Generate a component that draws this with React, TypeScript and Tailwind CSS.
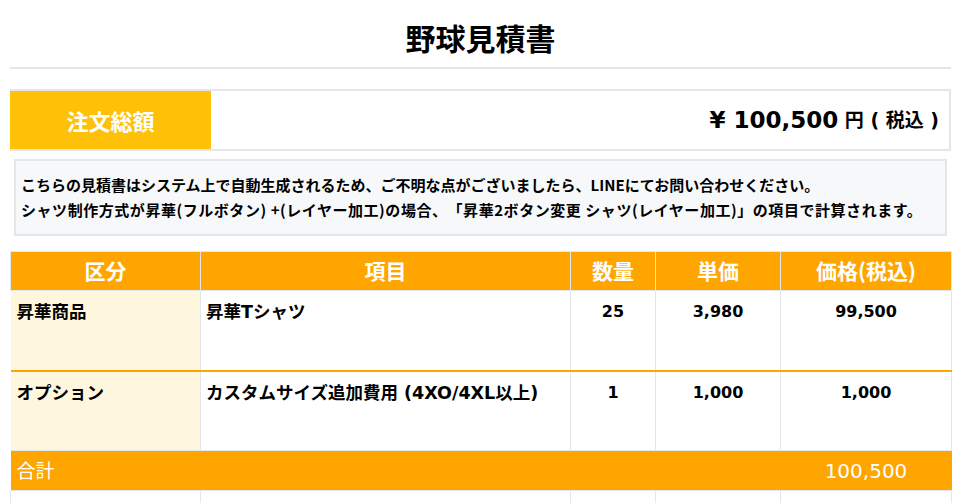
export default function App() {
  const cjk = { fontFamily: '"Noto Sans CJK JP", "Noto Sans", sans-serif' };
  const mix = { fontFamily: '"DejaVu Sans", "Noto Sans CJK JP", sans-serif' };
  const rows = [
    { cat: "昇華商品", item: "昇華Tシャツ", qty: "25", unit: "3,980", price: "99,500", border: "border-b-2 border-b-[#ffa500]" },
    { cat: "オプション", item: "カスタムサイズ追加費用 (4XO/4XL以上)", qty: "1", unit: "1,000", price: "1,000", border: "border-b border-b-[#dfe3e8]" },
  ];
  return (
    <div className="w-[961px] h-[503px] overflow-hidden bg-white px-[10px] text-black [text-spacing-trim:space-all]" style={cjk}>
      <div className="h-[69px] flex items-center justify-center border-b-2 border-[#e3e6ea]">
        <h1 className="text-[30px] font-bold leading-none pt-[6px]">野球見積書</h1>
      </div>
      <div className="mt-[20px] flex h-[62px] border-2 border-l-0 border-[#e3e6ea]">
        <div className="w-[201px] bg-[#ffc107] text-white text-[22px] font-bold flex items-center justify-center">注文総額</div>
        <div className="flex-1 flex items-center justify-end pr-[10px] font-bold whitespace-pre" style={mix}>
          <span className="text-[23px]">¥ 100,500</span>
          <span className="text-[19px]"> 円 ( 税込 )</span>
        </div>
      </div>
      <div className="mt-[8px] mx-[4px] h-[77px] border-2 border-[#e3e6ea] bg-[#f7f8fa] px-[5px] pt-[11px] text-[15px] font-bold leading-[25px] whitespace-nowrap">
        <div>こちらの見積書はシステム上で自動生成されるため、ご不明な点がございましたら、LINEにてお問い合わせください。</div>
        <div className="tracking-[0.55px]">シャツ制作方式が昇華(フルボタン) +(レイヤー加工)の場合、「昇華2ボタン変更 シャツ(レイヤー加工)」の項目で計算されます。</div>
      </div>
      <table className="mt-[15px] w-[941px] border-collapse table-fixed">
        <colgroup>
          <col className="w-[190px]" />
          <col className="w-[370px]" />
          <col className="w-[85px]" />
          <col className="w-[125px]" />
          <col className="w-[171px]" />
        </colgroup>
        <thead>
          <tr className="h-[39px] bg-[#ffa500] text-white text-[21px] font-bold">
            <th className="border border-[#e3e6ea] font-bold">区分</th>
            <th className="border border-[#e3e6ea] font-bold">項目</th>
            <th className="border border-[#e3e6ea] font-bold">数量</th>
            <th className="border border-[#e3e6ea] font-bold">単価</th>
            <th className="border border-[#e3e6ea] font-bold">価格(税込)</th>
          </tr>
        </thead>
        <tbody className="text-[16px] font-bold" style={mix}>
          {rows.map((r, i) => (
            <tr key={i} className={`h-[80px] align-top ${r.border}`}>
              <td className="bg-[#fff7dd] px-[6px] pt-[8px] text-[17.5px]">{r.cat}</td>
              <td className="border-x border-[#e3e6ea] px-[5px] pt-[8px] text-[17.5px]">{r.item}</td>
              <td className="border-x border-[#e3e6ea] text-center pt-[9px]">{r.qty}</td>
              <td className="border-x border-[#e3e6ea] text-center pt-[9px]">{r.unit}</td>
              <td className="border-x border-[#e3e6ea] text-center pt-[9px]">{r.price}</td>
            </tr>
          ))}
          <tr className="h-[40px] bg-[#ffa500] text-white font-normal">
            <td colSpan={4} className="px-[6px] text-[19px] border-y border-[#e3e6ea]" style={cjk}>合計</td>
            <td className="text-center text-[20px] border-y border-[#e3e6ea]">100,500</td>
          </tr>
          <tr className="h-[40px]">
            <td className="border border-[#e3e6ea]"></td>
            <td className="border border-[#e3e6ea]"></td>
            <td className="border border-[#e3e6ea]"></td>
            <td className="border border-[#e3e6ea]"></td>
            <td className="border border-[#e3e6ea]"></td>
          </tr>
        </tbody>
      </table>
    </div>
  );
}
